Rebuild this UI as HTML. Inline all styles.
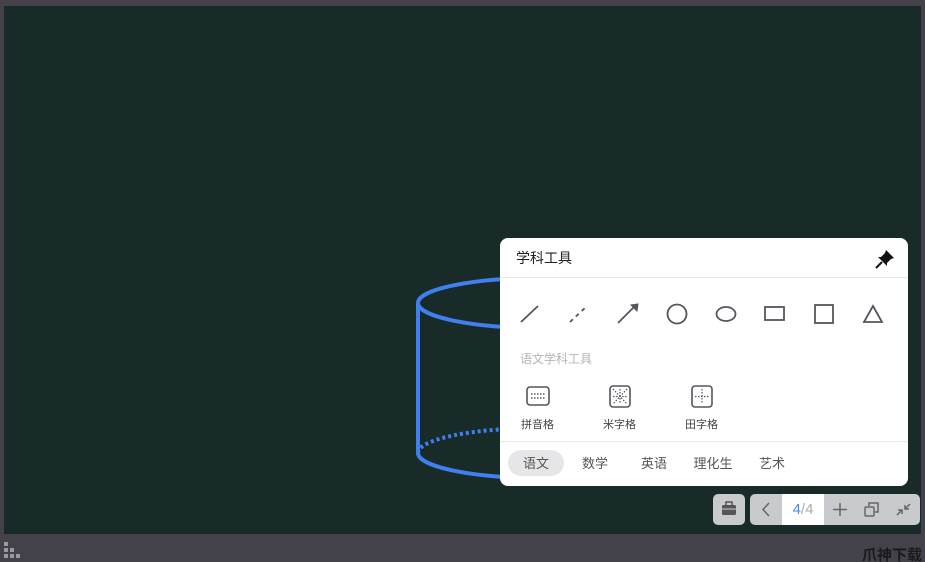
<!DOCTYPE html>
<html><head><meta charset="utf-8"><style>
*{margin:0;padding:0;box-sizing:border-box}
body{width:925px;height:562px;background:#434149;position:relative;overflow:hidden;font-family:"Liberation Sans","Noto Sans CJK SC",sans-serif}
.canvas{position:absolute;left:4px;top:6px;width:917px;height:528px;background:#182b29}
.panel{position:absolute;left:500px;top:238px;width:408px;height:248px;background:#fff;border-radius:8px}
.title{position:absolute;left:16px;top:10px;font-size:14px;color:#222}
.hr{position:absolute;left:0;width:408px;height:1px;background:#e8e8ea}
.sub{position:absolute;left:20px;top:112px;font-size:12px;color:#b4b4b8}
.lbl{position:absolute;top:178px;font-size:11px;color:#444}
.tab{position:absolute;top:212px;height:26px;line-height:28px;font-size:13px;color:#555;text-align:center}
.btn{position:absolute;top:494px;height:31px;background:#c9cacd;border-radius:5px}
</style></head><body>
<div class="canvas"></div>
<svg style="position:absolute;left:0;top:0" width="925" height="562">
<g fill="none" stroke="#3f7ff0" stroke-width="4">
<ellipse cx="540" cy="303" rx="122" ry="25"/>
<line x1="418" y1="303" x2="418" y2="453"/>
<path d="M418 453 A122 25 0 0 0 662 453"/>
<path d="M418 453 A122 25 0 0 1 662 453" stroke-dasharray="3 3"/>
</g>
<g fill="#9a999e"><rect x="4" y="542" width="4" height="4"/><rect x="4" y="548" width="4" height="4"/><rect x="10" y="548" width="4" height="4"/><rect x="4" y="554" width="4" height="4"/><rect x="10" y="554" width="4" height="4"/><rect x="16" y="554" width="4" height="4"/></g>
<text x="862" y="560" font-size="15" font-weight="bold" fill="#1a1a1a" font-family="Noto Sans CJK SC,sans-serif">爪神下载</text>
</svg>
<div class="panel">
<div class="title">学科工具</div>
<svg style="position:absolute;left:374px;top:10px" width="22" height="22" viewBox="0 0 22 22"><path d="M12 2 L20 10 L17 11 L13 15 L13 18 L4 9 L7 9 L11 5 Z" fill="#111"/><path d="M8 14 L2 20" stroke="#111" stroke-width="2"/></svg>
<div class="hr" style="top:39px"></div>
<svg style="position:absolute;left:0;top:60px" width="408" height="32" fill="none" stroke="#55555d" stroke-width="1.8">
<line x1="21" y1="24" x2="38" y2="8"/>
<line x1="70" y1="24" x2="87" y2="8" stroke-dasharray="4 4"/>
<line x1="118" y1="25" x2="134" y2="9"/><path d="M131 7 L138 6 L137 13 Z" fill="#55555d" stroke-width="1"/>
<circle cx="177" cy="16" r="9.5"/>
<ellipse cx="226" cy="16" rx="9.5" ry="7"/>
<rect x="265" y="9" width="19" height="13"/>
<rect x="315" y="7" width="18" height="18"/>
<path d="M373 8 L382 24 L364 24 Z"/>
</svg>
<div class="sub">语文学科工具</div>
<svg style="position:absolute;left:26px;top:147px" width="24" height="24" fill="none" stroke="#55555d" stroke-width="1.6"><rect x="1" y="2" width="22" height="18" rx="3"/><path d="M5 9 H19 M5 13 H19" stroke-dasharray="1.5 1.5"/></svg>
<svg style="position:absolute;left:108px;top:147px" width="24" height="24" fill="none" stroke="#55555d" stroke-width="1.6"><rect x="2" y="1" width="20" height="21" rx="3"/><path d="M5 4 L19 19 M19 4 L5 19 M12 4 V19 M5 11.5 H19" stroke-width="1.2" stroke-dasharray="1.5 1.5"/></svg>
<svg style="position:absolute;left:190px;top:147px" width="24" height="24" fill="none" stroke="#55555d" stroke-width="1.6"><rect x="2" y="1" width="20" height="21" rx="3"/><path d="M12 4 V19 M5 11.5 H19" stroke-width="1.2" stroke-dasharray="1.5 1.5"/></svg>
<div class="lbl" style="left:21px">拼音格</div>
<div class="lbl" style="left:103px">米字格</div>
<div class="lbl" style="left:185px">田字格</div>
<div class="hr" style="top:203px"></div>
<div class="tab" style="left:8px;width:56px;background:#e6e6e8;border-radius:13px">语文</div>
<div class="tab" style="left:68px;width:54px">数学</div>
<div class="tab" style="left:127px;width:54px">英语</div>
<div class="tab" style="left:186px;width:54px">理化生</div>
<div class="tab" style="left:245px;width:54px">艺术</div>
</div>
<div class="btn" style="left:713px;width:32px"><svg width="32" height="31"><rect x="9" y="11" width="14" height="10" rx="1.5" fill="#555"/><rect x="13" y="8" width="6" height="4" fill="none" stroke="#555" stroke-width="1.5"/><line x1="9" y1="15" x2="23" y2="15" stroke="#c9cacd"/></svg></div>
<div class="btn" style="left:750px;width:170px">
<svg style="position:absolute;left:0;top:0" width="170" height="31" fill="none" stroke="#666" stroke-width="1.5">
<path d="M19 9 L13 15.5 L19 22"/>
<path d="M90 9 V22 M83 15.5 H97"/>
<rect x="115" y="13" width="9" height="9" rx="1"/><path d="M119 12 V9 H128 V18 H125"/>
<path d="M147 21 L152 16 M148 16 H152 V20 M160 10 L155 15 M155 11 V15 H159"/>
</svg>
<div style="position:absolute;left:32px;top:0;width:42px;height:31px;background:#fff;text-align:center;line-height:31px;font-size:15px;color:#aaa"><span style="color:#4a8af0">4</span>/4</div>
</div>
</body></html>
